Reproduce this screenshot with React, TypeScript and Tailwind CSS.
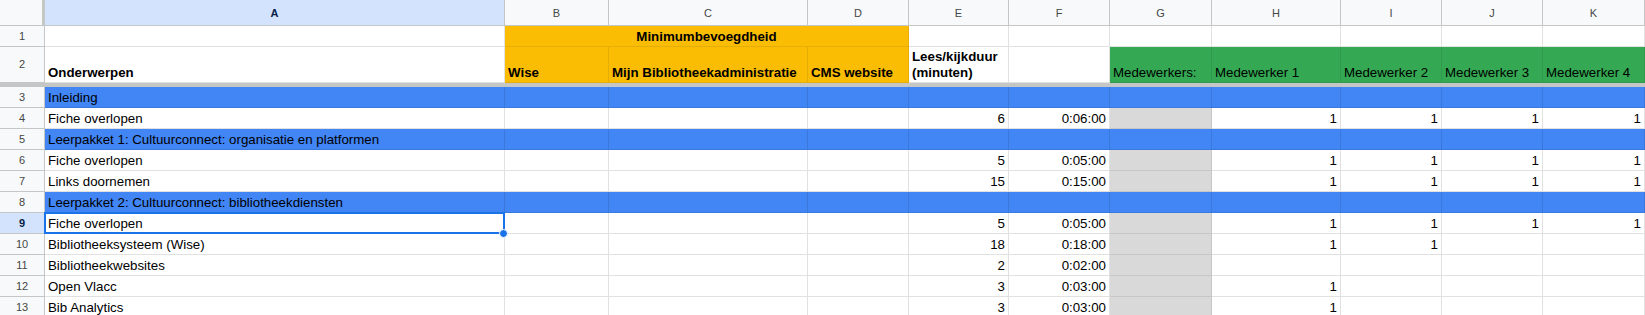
import React from 'react';

// column widths: row header, A..K
const W = [
  'w-[45px]',
  'w-[460px]',
  'w-[104px]',
  'w-[199px]',
  'w-[101px]',
  'w-[100px]',
  'w-[101px]',
  'w-[102px]',
  'w-[129px]',
  'w-[101px]',
  'w-[101px]',
  'w-[102px]',
];

const LETTERS = ['A', 'B', 'C', 'D', 'E', 'F', 'G', 'H', 'I', 'J', 'K'];

type Row =
  | { n: number; section: string }
  | { n: number; a: string; e: string; f: string; m: string[]; sel?: boolean };

const rows: Row[] = [
  { n: 3, section: 'Inleiding' },
  { n: 4, a: 'Fiche overlopen', e: '6', f: '0:06:00', m: ['1', '1', '1', '1'] },
  { n: 5, section: 'Leerpakket 1: Cultuurconnect: organisatie en platformen' },
  { n: 6, a: 'Fiche overlopen', e: '5', f: '0:05:00', m: ['1', '1', '1', '1'] },
  { n: 7, a: 'Links doornemen', e: '15', f: '0:15:00', m: ['1', '1', '1', '1'] },
  { n: 8, section: 'Leerpakket 2: Cultuurconnect: bibliotheekdiensten' },
  { n: 9, a: 'Fiche overlopen', e: '5', f: '0:05:00', m: ['1', '1', '1', '1'], sel: true },
  { n: 10, a: 'Bibliotheeksysteem (Wise)', e: '18', f: '0:18:00', m: ['1', '1', '', ''] },
  { n: 11, a: 'Bibliotheekwebsites', e: '2', f: '0:02:00', m: ['', '', '', ''] },
  { n: 12, a: 'Open Vlacc', e: '3', f: '0:03:00', m: ['1', '', '', ''] },
  { n: 13, a: 'Bib Analytics', e: '3', f: '0:03:00', m: ['1', '', '', ''] },
];

function RowHead({ n, active }: { n: number; active?: boolean }) {
  return (
    <div
      className={`${W[0]} shrink-0 flex items-center justify-center border-r border-b border-[#c4c7c5] text-[11px] ${
        active ? 'bg-[#d3e3fd] text-[#041e49] font-bold' : 'bg-[#f8f9fa] text-[#444746]'
      }`}
    >
      {n}
    </div>
  );
}

function Cell({
  w,
  children,
  className = '',
}: {
  w: string;
  children?: React.ReactNode;
  className?: string;
}) {
  return (
    <div
      className={`${w} shrink-0 flex items-end pb-[1px] px-[3px] leading-[16px] whitespace-nowrap overflow-visible border-r border-b ${className}`}
    >
      {children}
    </div>
  );
}

export default function App() {
  return (
    <div className="w-[1645px] h-[315px] overflow-hidden bg-white text-black text-[13.3px] font-['Liberation_Sans',Arial,sans-serif]">
      {/* column letters */}
      <div className="flex h-[26px]">
        <div className="w-[45px] shrink-0 bg-[#f8f9fa] border-r-[3px] border-b border-[#c4c7c5]" />
        {LETTERS.map((l, i) => (
          <div
            key={l}
            className={`${W[i + 1]} shrink-0 flex items-center justify-center pt-[1px] border-r border-b border-[#c4c7c5] text-[11px] ${
              i === 0 ? 'bg-[#d3e3fd] text-[#041e49] font-bold' : 'bg-[#f8f9fa] text-[#444746]'
            }`}
          >
            {l}
          </div>
        ))}
      </div>

      {/* row 1 */}
      <div className="flex h-[21px]">
        <RowHead n={1} />
        <Cell w={W[1]} className="border-[#e1e1e1]" />
        <div className="w-[404px] shrink-0 flex items-end justify-center pb-[1px] leading-[16px] font-bold bg-[#fbbc04] border-r border-b border-[#e7ad07]">
          Minimumbevoegdheid
        </div>
        {[5, 6, 7, 8, 9, 10, 11].map((i) => (
          <Cell key={i} w={W[i]} className="border-[#e1e1e1]" />
        ))}
      </div>

      {/* row 2 */}
      <div className="flex h-[36px]">
        <RowHead n={2} />
        <Cell w={W[1]} className="border-[#e1e1e1] font-bold">
          Onderwerpen
        </Cell>
        <Cell w={W[2]} className="bg-[#fbbc04] border-[#e7ad07] font-bold">
          Wise
        </Cell>
        <Cell w={W[3]} className="bg-[#fbbc04] border-[#e7ad07] font-bold">
          Mijn Bibliotheekadministratie
        </Cell>
        <Cell w={W[4]} className="bg-[#fbbc04] border-[#e7ad07] font-bold">
          CMS website
        </Cell>
        <Cell w={W[5]} className="border-[#e1e1e1] font-bold whitespace-normal">
          <span>
            Lees/kijkduur
            <br />
            (minuten)
          </span>
        </Cell>
        <Cell w={W[6]} className="border-[#e1e1e1]" />
        <Cell w={W[7]} className="bg-[#34a853] border-[#2f9a4b]">
          Medewerkers:
        </Cell>
        <Cell w={W[8]} className="bg-[#34a853] border-[#2f9a4b]">
          Medewerker 1
        </Cell>
        <Cell w={W[9]} className="bg-[#34a853] border-[#2f9a4b]">
          Medewerker 2
        </Cell>
        <Cell w={W[10]} className="bg-[#34a853] border-[#2f9a4b]">
          Medewerker 3
        </Cell>
        <Cell w={W[11]} className="bg-[#34a853] border-[#2f9a4b]">
          Medewerker 4
        </Cell>
      </div>

      {/* frozen divider */}
      <div className="h-[4px] bg-[#c4c7c5]" />

      {/* body */}
      <div className="relative">
        {rows.map((r) =>
          'section' in r ? (
            <div key={r.n} className="flex h-[21px]">
              <RowHead n={r.n} />
              <Cell w={W[1]} className="bg-[#4285f4] border-[#3b78dc]">
                {r.section}
              </Cell>
              {[2, 3, 4, 5, 6, 7, 8, 9, 10, 11].map((i) => (
                <Cell key={i} w={W[i]} className="bg-[#4285f4] border-[#3b78dc]" />
              ))}
            </div>
          ) : (
            <div key={r.n} className="flex h-[21px]">
              <RowHead n={r.n} active={r.sel} />
              <Cell w={W[1]} className="border-[#e1e1e1]">
                {r.a}
              </Cell>
              {[2, 3, 4].map((i) => (
                <Cell key={i} w={W[i]} className="border-[#e1e1e1]" />
              ))}
              <Cell w={W[5]} className="border-[#e1e1e1] justify-end">
                {r.e}
              </Cell>
              <Cell w={W[6]} className="border-[#e1e1e1] justify-end">
                {r.f}
              </Cell>
              <Cell w={W[7]} className="bg-[#d9d9d9] border-[#c6c6c6]" />
              {r.m.map((v, j) => (
                <Cell key={j} w={W[8 + j]} className="border-[#e1e1e1] justify-end">
                  {v}
                </Cell>
              ))}
            </div>
          )
        )}

        {/* active cell A9 */}
        <div className="absolute left-[44px] top-[125px] w-[461px] h-[22px] border-2 border-[#1a73e8] pointer-events-none" />
        <div className="absolute left-[499px] top-[142px] w-[9px] h-[9px] rounded-full bg-[#1a73e8] border border-white pointer-events-none" />
      </div>
    </div>
  );
}
